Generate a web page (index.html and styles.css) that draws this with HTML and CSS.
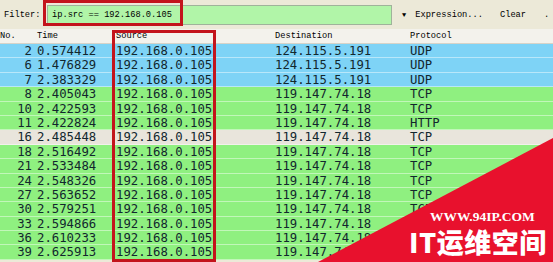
FILE: index.html
```html
<!DOCTYPE html>
<html lang="en">
<head>
    <meta charset="UTF-8">
    <title>Packet list</title>
    <link rel="stylesheet" href="styles.css">
</head>
<body>
    <div class="toolbar">
        <span class="label">Filter:</span>
        <div class="filter-input">ip.src == 192.168.0.105</div>
        <span class="arrow">&#9660;</span>
        <span class="btn">Expression...</span>
        <span class="btn clear">Clear</span>
        <span class="btn more">.</span>
        <div class="mark mark-filter"></div>
    </div>

    <div class="packets">
        <div class="row head">
            <div class="c no">No.</div>
            <div class="c">Time</div>
            <div class="c">Source</div>
            <div class="c">Destination</div>
            <div class="c">Protocol</div>
        </div>
        <div class="row udp"><div class="c no">2</div><div class="c">0.574412</div><div class="c">192.168.0.105</div><div class="c">124.115.5.191</div><div class="c">UDP</div></div>
        <div class="row udp"><div class="c no">6</div><div class="c">1.476829</div><div class="c">192.168.0.105</div><div class="c">124.115.5.191</div><div class="c">UDP</div></div>
        <div class="row udp"><div class="c no">7</div><div class="c">2.383329</div><div class="c">192.168.0.105</div><div class="c">124.115.5.191</div><div class="c">UDP</div></div>
        <div class="row tcp"><div class="c no">8</div><div class="c">2.405043</div><div class="c">192.168.0.105</div><div class="c">119.147.74.18</div><div class="c">TCP</div></div>
        <div class="row tcp"><div class="c no">10</div><div class="c">2.422593</div><div class="c">192.168.0.105</div><div class="c">119.147.74.18</div><div class="c">TCP</div></div>
        <div class="row tcp"><div class="c no">11</div><div class="c">2.422824</div><div class="c">192.168.0.105</div><div class="c">119.147.74.18</div><div class="c">HTTP</div></div>
        <div class="row bad"><div class="c no">16</div><div class="c">2.485448</div><div class="c">192.168.0.105</div><div class="c">119.147.74.18</div><div class="c">TCP</div></div>
        <div class="row tcp"><div class="c no">18</div><div class="c">2.516492</div><div class="c">192.168.0.105</div><div class="c">119.147.74.18</div><div class="c">TCP</div></div>
        <div class="row tcp"><div class="c no">21</div><div class="c">2.533484</div><div class="c">192.168.0.105</div><div class="c">119.147.74.18</div><div class="c">TCP</div></div>
        <div class="row tcp"><div class="c no">24</div><div class="c">2.548326</div><div class="c">192.168.0.105</div><div class="c">119.147.74.18</div><div class="c">TCP</div></div>
        <div class="row tcp"><div class="c no">27</div><div class="c">2.563652</div><div class="c">192.168.0.105</div><div class="c">119.147.74.18</div><div class="c">TCP</div></div>
        <div class="row tcp"><div class="c no">30</div><div class="c">2.579251</div><div class="c">192.168.0.105</div><div class="c">119.147.74.18</div><div class="c">TCP</div></div>
        <div class="row tcp"><div class="c no">33</div><div class="c">2.594866</div><div class="c">192.168.0.105</div><div class="c">119.147.74.18</div><div class="c">TCP</div></div>
        <div class="row tcp"><div class="c no">36</div><div class="c">2.610233</div><div class="c">192.168.0.105</div><div class="c">119.147.74.18</div><div class="c">TCP</div></div>
        <div class="row tcp"><div class="c no">39</div><div class="c">2.625913</div><div class="c">192.168.0.105</div><div class="c">119.147.74.18</div><div class="c">TCP</div></div>
        <div class="mark mark-source"></div>
    </div>

    <!-- watermark corner -->
    <div class="watermark">
        <svg class="corner" width="235" height="124" viewBox="0 0 235 124">
            <polygon points="235,0 235,124 0,124" fill="#e8112d"/>
        </svg>
        <div class="wm-url">WWW.94IP.COM</div>
        <div class="wm-name">IT运维空间</div>
    </div>
</body>
</html>
```

FILE: styles.css
```css
body {
    margin: 0;
    width: 553px;
    height: 262px;
    overflow: hidden;
    background: #ece9d8;
    position: relative;
}

.toolbar {
    position: relative;
    display: flex;
    align-items: center;
    height: 29px;
    font-family: 'Liberation Mono', monospace;
    font-size: 8.7px;
    color: #000;
}

.toolbar .label {
    padding-left: 4px;
    width: 39px;
}

.filter-input {
    width: 339px;
    height: 18px;
    margin-left: 4px;
    padding-left: 4px;
    line-height: 18px;
    background: #b1f5a8;
    border: 1px solid #9fb39a;
}

.arrow {
    margin-left: 10px;
    font-size: 7px;
}

.btn {
    margin-left: 9px;
}

.btn.clear {
    margin-left: 17px;
}

.btn.more {
    margin-left: 18px;
}

.mark {
    position: absolute;
    border: 3px solid #c3141c;
    box-sizing: border-box;
}

.mark-filter {
    left: 43px;
    top: 0;
    width: 140px;
    height: 26px;
}

.packets {
    position: relative;
}

.row {
    display: grid;
    grid-template-columns: 33px 79px 159px 135px 1fr;
    height: 14.4px;
    line-height: 14.4px;
    box-sizing: border-box;
    border-bottom: 1px solid rgba(255, 255, 255, 0.45);
    font-family: 'DejaVu Sans Mono', monospace;
    font-size: 12.3px;
    color: #12272e;
    white-space: nowrap;
}

.row .c {
    padding-left: 4px;
    overflow: hidden;
}

.row .c.no {
    padding-left: 0;
    padding-right: 1px;
    text-align: right;
}

.row.head {
    height: 15px;
    line-height: 15px;
    background: #f3f2ec;
    border-bottom: 1px solid #d6d3c8;
    font-family: 'Liberation Mono', monospace;
    font-size: 8.7px;
    color: #000;
}

.row.head .c.no {
    text-align: left;
}

.row.udp {
    background: #7ed3f6;
}

.row.tcp {
    background: #8ff080;
}

.row.bad {
    background: #e9e5dc;
}

.mark-source {
    left: 112px;
    top: 1px;
    width: 104px;
    height: 232px;
}

.watermark {
    position: absolute;
    right: 0;
    bottom: 0;
    width: 235px;
    height: 124px;
}

.watermark .corner {
    display: block;
}

.wm-url {
    position: absolute;
    left: 112px;
    top: 71px;
    font-family: 'Liberation Serif', serif;
    font-weight: bold;
    font-size: 13.5px;
    color: #fff;
}

.wm-name {
    position: absolute;
    left: 91px;
    top: 88px;
    font-family: 'Noto Sans CJK SC', sans-serif;
    font-weight: 900;
    font-size: 27px;
    line-height: 32px;
    letter-spacing: 0.5px;
    color: #fff;
    white-space: nowrap;
}
```
